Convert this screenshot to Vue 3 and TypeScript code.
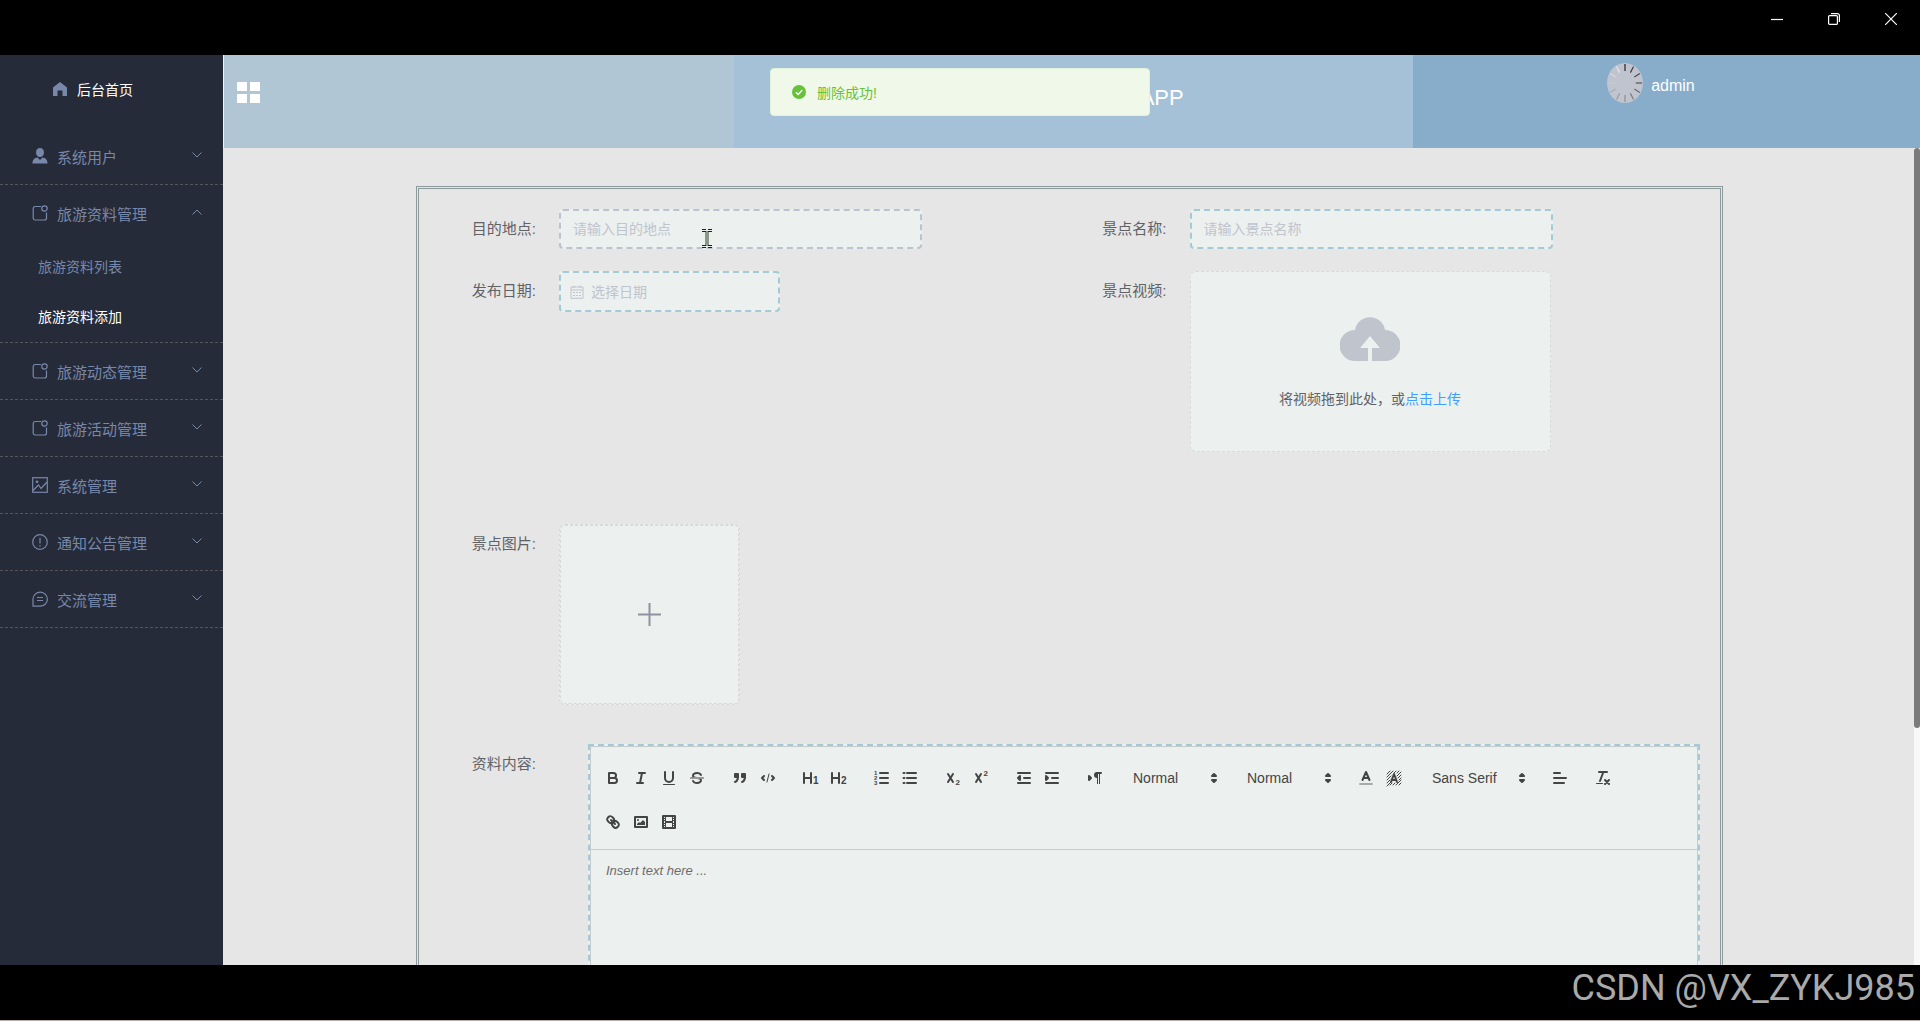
<script setup lang="ts">
import { ref } from 'vue'

interface MenuEntry {
  label: string
  icon: 'user' | 'badge' | 'picture' | 'warning' | 'chat'
  children?: string[]
}

const menu: MenuEntry[] = [
  { label: '系统用户', icon: 'user' },
  { label: '旅游资料管理', icon: 'badge', children: ['旅游资料列表', '旅游资料添加'] },
  { label: '旅游动态管理', icon: 'badge' },
  { label: '旅游活动管理', icon: 'badge' },
  { label: '系统管理', icon: 'picture' },
  { label: '通知公告管理', icon: 'warning' },
  { label: '交流管理', icon: 'chat' },
]
const activePage = ref('旅游资料添加')

const form = ref({ place: '', name: '', date: '', content: '' })

interface Tool {
  title: string
  svg: string
}
const groupsBefore: Tool[][] = [
  [
    { title: '加粗', svg: '<path d="M5,4H9.5A2.5,2.5,0,0,1,9.5,9H5Z"/><path d="M5,9h5.5A2.5,2.5,0,0,1,10.5,14H5Z"/>' },
    { title: '斜体', svg: '<path d="M7,4H13M5,14H11M8,14L10,4"/>' },
    { title: '下划线', svg: '<path d="M5,3V9a4,4,0,0,0,8,0V3"/><rect class="f" x="3" y="15" width="12" height="1" rx=".5"/>' },
    { title: '删除线', svg: '<path class="f" d="M9.007,8C6.542,7.791,6,7.519,6,6.5,6,5.792,7.283,5,9,5c1.571,0,2.765.679,2.969,1.309a1,1,0,0,0,1.9-.617C13.356,4.106,11.354,3,9,3,6.2,3,4,4.538,4,6.5a3.2,3.2,0,0,0,.5,1.843Z"/><path class="f" d="M8.984,10C11.457,10.208,12,10.479,12,11.5c0,0.708-1.283,1.5-3,1.5-1.571,0-2.765-.679-2.969-1.309a1,1,0,1,0-1.9.617C4.644,13.894,6.646,15,9,15c2.8,0,5-1.538,5-3.5a3.2,3.2,0,0,0-.5-1.843Z"/><rect class="f" x="2" y="8.5" width="14" height="1" rx=".5"/>' },
  ],
  [
    { title: '引用', svg: '<rect class="fs" x="4" y="5" width="3" height="3"/><rect class="fs" x="11" y="5" width="3" height="3"/><path class="fs" d="M7,8c0,4.031-3,5-3,5"/><path class="fs" d="M14,8c0,4.031-3,5-3,5"/>' },
    { title: '代码', svg: '<path d="M5,7L3,9L5,11M13,7L15,9L13,11"/><path class="thin" d="M10,5L8,13"/>' },
  ],
  [
    { title: '标题 1', svg: '<path d="M2,4V14M9,4V14M2,9H9"/><text x="11" y="15" font-size="10">1</text>' },
    { title: '标题 2', svg: '<path d="M2,4V14M9,4V14M2,9H9"/><text x="11" y="15" font-size="10">2</text>' },
  ],
  [
    { title: '有序列表', svg: '<path d="M7,4H15M7,9H15M7,14H15"/><text x="1" y="6" font-size="6">1</text><text x="1" y="11" font-size="6">2</text><text x="1" y="16" font-size="6">3</text>' },
    { title: '无序列表', svg: '<path d="M6,4H15M6,9H15M6,14H15M2.5,4H3.5M2.5,9H3.5M2.5,14H3.5"/>' },
  ],
  [
    { title: '下标', svg: '<path d="M4,5L9,13M9,5L4,13"/><text x="11.5" y="16" font-size="8">2</text>' },
    { title: '上标', svg: '<path d="M4,5L9,13M9,5L4,13"/><text x="11.5" y="7" font-size="8">2</text>' },
  ],
  [
    { title: '减少缩进', svg: '<path d="M3,4H15M3,14H15M9,9H15"/><path class="fs" d="M5,7V11L3,9Z"/>' },
    { title: '增加缩进', svg: '<path d="M3,4H15M3,14H15M9,9H15"/><path class="fs" d="M3,7V11L5,9Z"/>' },
  ],
  [
    { title: '文字方向', svg: '<path class="fs" d="M3,11L5,9L3,7Z"/><path d="M11,4H15"/><path class="f" d="M11,3a3,3,0,0,0,0,6h1V3Z"/><rect class="f" x="11" y="4" width="1" height="11"/><rect class="f" x="13" y="4" width="1" height="11"/>' },
  ],
]
const colorTools: Tool[] = [
  { title: '字体颜色', svg: '<path d="M5.5,11L9,3L12.5,11M6.4,9H11.6"/><path stroke-opacity=".4" d="M3,15H15"/>' },
  { title: '背景颜色', svg: '<path class="hatch" d="M2,5L5,2M2,8L8,2M2,11L6,7M2,14L5,11M2,17L6,13M9,4L11,2M12,4L14,2M12,7L16,3M13,9L16,6M14,11L16,9M5,16L7,14M8,16L10,14M11,16L16,11M14,16L16,14"/><path d="M6,13L9,5L12,13M7,11H11"/>' },
]
const lastTools: Tool[][] = [
  [{ title: '对齐', svg: '<path d="M3,9H15M3,14H13M3,4H9"/>' }],
  [{ title: '清除格式', svg: '<path d="M5,3H13M6,12L9.35,3M11,11L15,15M15,11L11,15"/><rect class="f" x="2" y="14" width="7" height="1" rx=".5"/>' }],
  [
    { title: '链接', svg: '<path d="M7,7L11,11"/><path d="M8.9,4.577a3.476,3.476,0,0,1,.36,4.679A3.476,3.476,0,0,1,4.577,8.9C3.185,7.5,2.035,6.4,4.217,4.217S7.5,3.185,8.9,4.577Z"/><path d="M13.423,9.1a3.476,3.476,0,0,0-4.679-.36,3.476,3.476,0,0,0,.36,4.679c1.392,1.392,2.5,2.542,4.679.36S14.815,10.5,13.423,9.1Z"/>' },
    { title: '图片', svg: '<rect x="3" y="4" width="12" height="10"/><circle class="f" cx="6" cy="7" r="1"/><path class="f" d="M5,12V11L7,9L8,10L11,7L13,9V12Z"/>' },
    { title: '视频', svg: '<rect x="3" y="3" width="12" height="12"/><path class="f" d="M5,3h1v12H5ZM12,3h1v12h-1ZM5,8h8v2H5ZM3,5h3v1H3ZM3,7h3v1H3ZM3,10h3v1H3ZM3,12h3v1H3ZM12,5h3v1h-3ZM12,7h3v1h-3ZM12,10h3v1h-3ZM12,12h3v1h-3Z"/>' },
  ],
]

const spokes = Array.from({ length: 12 }, (_, i) => ({
  angle: i * 30,
  color: ['#111', '#333', '#444', '#555', '#666', '#777', '#888', '#999', '#aaa', '#c8ccd2', '#d6dade', '#e6e9ec'][i],
}))
</script>

<template>
  <div class="screen">
    <div class="titlebar">
      <button type="button" aria-label="最小化">
        <svg width="12" height="12" viewBox="0 0 12 12"><path d="M0 6.5H12" /></svg>
      </button>
      <button type="button" aria-label="还原">
        <svg width="12" height="12" viewBox="0 0 12 12"><rect x=".6" y="2.6" width="8.8" height="8.8" rx="1" /><path d="M3 .6H9.4A2 2 0 0 1 11.4 2.6V9" /></svg>
      </button>
      <button type="button" aria-label="关闭">
        <svg width="12" height="12" viewBox="0 0 12 12"><path d="M0 0L12 12M12 0L0 12" /></svg>
      </button>
    </div>

    <div class="workspace">
      <nav class="sidebar">
        <a class="home" href="#">
          <svg width="14" height="14" viewBox="0 0 14 14"><path fill="currentColor" d="M7 0L14 5.5V14H9.5V8.5H4.5V14H0V5.5Z" /></svg>
          <span>后台首页</span>
        </a>
        <ul class="menu">
          <li v-for="entry in menu" :key="entry.label">
            <button type="button" class="entry" :aria-expanded="!!entry.children">
              <svg class="glyph" width="16" height="16" viewBox="0 0 16 16">
                <g v-if="entry.icon === 'user'" fill="currentColor" stroke="none">
                  <ellipse cx="8" cy="4.5" rx="4" ry="4.5" />
                  <path d="M.5 15.5C.5 11.5 2.5 10 5.5 9.5L8 12L10.5 9.5C13.5 10 15.5 11.5 15.5 15.5Z" />
                </g>
                <g v-else-if="entry.icon === 'badge'">
                  <path d="M9 1.5H3A2 2 0 0 0 1.2 3.5V13A2 2 0 0 0 3 15H12.5A2 2 0 0 0 14.5 13V7.5" />
                  <circle cx="12.5" cy="3.5" r="2.7" />
                </g>
                <g v-else-if="entry.icon === 'picture'">
                  <rect x=".7" y=".7" width="14.6" height="14.6" />
                  <circle cx="5" cy="4.8" r=".8" />
                  <path d="M1 13.5L6.5 8L9 11.5L15 5" />
                </g>
                <g v-else-if="entry.icon === 'warning'">
                  <circle cx="8" cy="8" r="7.3" />
                  <path d="M8 3.8V9.5M8 11V12.5" />
                </g>
                <g v-else>
                  <path d="M1 15.2V8A7.2 7 0 1 1 8 15.2ZM5 6.5H11M5 9.5H11" />
                </g>
              </svg>
              <span>{{ entry.label }}</span>
              <svg class="chevron" width="10" height="6" viewBox="0 0 10 6"><path :d="entry.children ? 'M.5 5.5L5 1L9.5 5.5' : 'M.5 .5L5 5L9.5 .5'" /></svg>
            </button>
            <ul v-if="entry.children" class="submenu">
              <li v-for="child in entry.children" :key="child">
                <a href="#" :class="{ active: child === activePage }" @click.prevent="activePage = child">{{ child }}</a>
              </li>
            </ul>
          </li>
        </ul>
      </nav>

      <div class="main">
        <header class="topbar">
          <div class="left">
            <button type="button" aria-label="折叠菜单">
              <svg width="23" height="21" viewBox="0 0 23 21" fill="#fff"><path d="M0 0H10V9H0ZM13 0H23V9H13ZM0 12H10V21H0ZM13 12H23V21H13Z" /></svg>
            </button>
          </div>
          <h1>APP</h1>
          <div class="account">
            <svg width="36" height="40" viewBox="0 0 36 40">
              <ellipse cx="18" cy="20" rx="18" ry="20" fill="#c0c4cf" />
              <g transform="translate(18 20) scale(.9 1)" stroke-width="1.2">
                <path v-for="s in spokes" :key="s.angle" d="M0 -19V-12" :stroke="s.color" :transform="`rotate(${s.angle})`" />
              </g>
            </svg>
            <span>admin</span>
          </div>
        </header>

        <div class="viewport">
          <div class="content">
            <form class="panel" @submit.prevent>
              <div class="field">
                <label for="place">目的地点:</label>
                <div class="caret-host">
                  <input id="place" v-model="form.place" class="text hovered" type="text" placeholder="请输入目的地点">
                  <svg class="ibeam" width="12" height="19" viewBox="0 0 12 19">
                    <path d="M6 2V17" stroke="#8b9788" stroke-width="4" />
                    <path d="M1 .5H5M7 .5H11M1 2.5H5M7 2.5H11M1 16.5H5M7 16.5H11M1 18.5H5M7 18.5H11" stroke="#1c221c" />
                  </svg>
                </div>
              </div>
              <div class="field">
                <label for="name">景点名称:</label>
                <input id="name" v-model="form.name" class="text" type="text" placeholder="请输入景点名称">
              </div>
              <div class="field tall">
                <label for="date">发布日期:</label>
                <div class="date">
                  <svg width="14" height="14" viewBox="0 0 14 14"><path d="M1 2H13V13.3H1ZM1 5H13M4 .5V3M10 .5V3M3 7.5H5M6 7.5H8M9 7.5H11M3 10.5H5M6 10.5H8M9 10.5H11" /></svg>
                  <input id="date" v-model="form.date" type="text" placeholder="选择日期">
                </div>
              </div>
              <div class="field tall">
                <label for="video">景点视频:</label>
                <div class="drop">
                  <svg width="60" height="44" viewBox="0 0 60 44">
                    <path fill="#c0c4cc" d="M15 44A15.5 15.5 0 0 1 15 13A15.2 15.2 0 0 1 45 13A15.5 15.5 0 0 1 45 44H32V31H40L30 19L20 31H28V44Z" />
                  </svg>
                  <p>将视频拖到此处，或<a href="#">点击上传</a></p>
                  <input id="video" class="file" type="file">
                </div>
              </div>
              <div class="field wide picture">
                <label for="photo">景点图片:</label>
                <div class="photo">
                  <svg width="23" height="23" viewBox="0 0 23 23"><path d="M11.5 0V23M0 11.5H23" /></svg>
                  <input id="photo" class="file" type="file">
                </div>
              </div>
              <div class="field wide">
                <label for="body">资料内容:</label>
                <div class="editor">
                  <div class="tools">
                    <div v-for="(group, g) in groupsBefore" :key="g" class="group">
                      <button v-for="t in group" :key="t.title" type="button" :aria-label="t.title"><svg viewBox="0 0 18 18" v-html="t.svg" /></button>
                    </div>
                    <div class="picker">
                      <select aria-label="字号"><option>Normal</option></select>
                      <svg viewBox="0 0 18 18"><path class="fs" d="M7,11L9,13L11,11ZM7,7L9,5L11,7Z" /></svg>
                    </div>
                    <div class="picker">
                      <select aria-label="标题级别"><option>Normal</option></select>
                      <svg viewBox="0 0 18 18"><path class="fs" d="M7,11L9,13L11,11ZM7,7L9,5L11,7Z" /></svg>
                    </div>
                    <div class="group">
                      <button v-for="t in colorTools" :key="t.title" type="button" :aria-label="t.title"><svg viewBox="0 0 18 18" v-html="t.svg" /></button>
                    </div>
                    <div class="picker font">
                      <select aria-label="字体"><option>Sans Serif</option></select>
                      <svg viewBox="0 0 18 18"><path class="fs" d="M7,11L9,13L11,11ZM7,7L9,5L11,7Z" /></svg>
                    </div>
                    <div v-for="(group, g) in lastTools" :key="'l' + g" class="group">
                      <button v-for="t in group" :key="t.title" type="button" :aria-label="t.title"><svg viewBox="0 0 18 18" v-html="t.svg" /></button>
                    </div>
                  </div>
                  <textarea id="body" v-model="form.content" placeholder="Insert text here ..." />
                </div>
              </div>
            </form>
          </div>
          <div class="scrollbar"><div class="thumb" /></div>
        </div>
      </div>
    </div>

    <footer class="credit">CSDN @VX_ZYKJ985</footer>

    <div class="toast" role="alert">
      <svg width="14" height="14" viewBox="0 0 14 14"><circle cx="7" cy="7" r="7" fill="#67c23a" /><path d="M3.8 7.2L6.2 9.5L10.3 5" fill="none" stroke="#fff" stroke-width="1.3" /></svg>
      <span>删除成功!</span>
    </div>
  </div>
</template>

<style>
body {
  margin: 0;
  background: #000;
}
</style>

<style scoped>
* {
  box-sizing: border-box;
}
.screen {
  position: relative;
  display: flex;
  flex-direction: column;
  height: 100vh;
  overflow: hidden;
  background: #000;
  font-family: "Liberation Sans", "Noto Sans CJK SC", sans-serif;
  font-size: 14px;
}
button {
  padding: 0;
  border: 0;
  background: none;
  font: inherit;
  color: inherit;
}
a {
  color: inherit;
  text-decoration: none;
}
ul {
  margin: 0;
  padding: 0;
  list-style: none;
}
svg {
  display: block;
  flex: none;
}

.titlebar {
  display: flex;
  flex: none;
  justify-content: flex-end;
  align-items: flex-start;
  height: 55px;
  padding-right: 1px;
}
.titlebar button {
  display: grid;
  place-items: center;
  width: 57px;
  height: 38px;
}
.titlebar svg {
  fill: none;
  stroke: #fff;
  stroke-width: 1.2;
}

.workspace {
  display: flex;
  flex: 1;
  min-height: 0;
}
.sidebar {
  flex: none;
  width: 223px;
  background: #262b39;
  color: #7888ab;
}
.home {
  display: flex;
  align-items: center;
  gap: 10px;
  height: 67px;
  margin-bottom: 6px;
  padding-left: 53px;
}
.home span {
  color: #fff;
}
.menu > li {
  border-bottom: 1px dashed #555559;
}
.entry {
  display: flex;
  align-items: center;
  width: 100%;
  height: 56px;
  padding: 0 21px 0 32px;
  font-size: 15px;
}
.glyph {
  margin-right: 9px;
  fill: none;
  stroke: currentColor;
  stroke-width: 1.2;
}
.chevron {
  margin: 0 0 2px auto;
  fill: none;
  stroke: currentColor;
}
.submenu {
  padding-top: 1px;
}
.submenu a {
  display: block;
  padding-left: 38px;
  line-height: 50px;
}
.submenu .active {
  color: #fff;
}

.main {
  display: flex;
  flex: 1;
  flex-direction: column;
  min-width: 0;
  background: #e6e6e6;
}
.topbar {
  display: grid;
  grid-template-columns: 30.1% 40% 1fr;
  flex: none;
  height: 93px;
  border-left: 1px solid #f2f4f6;
  color: #fff;
}
.left {
  padding: 27px 13px;
  background: #b1c6d5;
}
.topbar h1 {
  display: flex;
  justify-content: center;
  margin: 0;
  padding-left: 176px;
  background: #a5c1d7;
  font-size: 22px;
  font-weight: 400;
  line-height: 86px;
}
.account {
  display: flex;
  justify-content: center;
  gap: 8px;
  padding: 8px 31px 0 0;
  background: #87adcb;
  font-size: 16px;
  line-height: 45px;
}

.viewport {
  display: flex;
  flex: 1;
  min-height: 0;
}
.content {
  flex: 1;
  min-width: 0;
  padding: 38px 191px 0 193px;
  overflow: hidden;
}
.scrollbar {
  flex: none;
  width: 6px;
  background: #f8f8f8;
}
.thumb {
  height: 71%;
  border-radius: 3px;
  background: #7b7b7b;
}

.panel {
  display: grid;
  grid-template-columns: 1fr 1fr;
  row-gap: 22px;
  padding: 20px;
  border: 3px double #8d999b;
}
.field {
  display: flex;
  align-items: flex-start;
  min-width: 0;
}
.field.wide {
  grid-column: 1 / -1;
}
.field.tall {
  min-height: 231px;
}
.field.picture {
  min-height: 198px;
}
.field label {
  flex: none;
  width: 120px;
  padding-right: 23px;
  color: #606266;
  font-size: 15px;
  line-height: 40px;
  text-align: right;
}
.text,
.date {
  border: 2px dashed #a4cbd5;
  border-radius: 4px;
  background: #ecf0ef;
}
.text {
  display: block;
  width: 363px;
  height: 40px;
  padding: 0 12px;
  font: inherit;
}
.text.hovered {
  border-color: #b9c4d0;
}
.text::placeholder,
.date input::placeholder {
  color: #c0c4cc;
  opacity: 1;
}
.caret-host {
  position: relative;
}
.ibeam {
  position: absolute;
  top: 20px;
  left: 142px;
}
.date {
  display: flex;
  align-items: center;
  gap: 7px;
  width: 221px;
  height: 41px;
  padding-left: 9px;
}
.date svg {
  fill: none;
  stroke: #c0c4cc;
}
.date input {
  flex: 1;
  min-width: 0;
  padding: 0;
  border: 0;
  background: none;
  font: inherit;
}
.drop {
  position: relative;
  display: flex;
  flex-direction: column;
  align-items: center;
  width: 361px;
  height: 181px;
  padding-top: 45px;
  border: 1px dashed #d9d9d9;
  border-radius: 6px;
  background: #ecf0ef;
  color: #606266;
}
.drop p {
  margin: 28px 0 0;
  line-height: 20px;
}
.drop a {
  color: #409eff;
}
.file {
  position: absolute;
  inset: 0;
  width: 100%;
  opacity: 0;
}
.photo {
  position: relative;
  display: grid;
  place-items: center;
  width: 181px;
  height: 181px;
  border: 1px dashed #d9d9d9;
  border-radius: 6px;
  outline: 1px dashed #d9d9d9;
  outline-offset: -2px;
  background: #ecf0ef;
}
.photo svg {
  stroke: #8f939f;
  stroke-width: 2;
}

.editor {
  flex: 1;
  min-width: 0;
  margin-left: 29px;
  border: 2px dashed #a4cbd5;
  background: #ecf0ef;
}
.tools {
  display: flex;
  flex-wrap: wrap;
  column-gap: 15px;
  padding: 9px 8px 5px;
  border: 1px solid #c6cccc;
}
.group {
  display: flex;
}
.group button {
  display: grid;
  place-items: center;
  width: 28px;
  height: 44px;
}
.tools svg {
  width: 18px;
  height: 18px;
  fill: none;
  stroke: #444;
  stroke-width: 2;
  stroke-linecap: round;
  stroke-linejoin: round;
}
.tools :deep(.f) {
  fill: #444;
  stroke: none;
}
.tools :deep(.fs) {
  fill: #444;
}
.tools :deep(.thin) {
  stroke-width: 1;
}
.tools :deep(.hatch) {
  stroke-width: 1;
}
.tools :deep(text) {
  fill: #444;
  stroke: none;
  font-weight: 700;
}
.picker {
  position: relative;
  display: flex;
  align-items: center;
  width: 99px;
  height: 44px;
}
.picker.font {
  width: 108px;
}
.picker select {
  width: 100%;
  height: 24px;
  padding: 0 20px 0 9px;
  border: 0;
  appearance: none;
  background: none;
  color: #444;
  font: inherit;
}
.picker svg {
  position: absolute;
  right: 0;
  pointer-events: none;
}
.editor textarea {
  display: block;
  width: 100%;
  height: 400px;
  padding: 12px 15px;
  border: 1px solid #c6cccc;
  border-top: 0;
  background: none;
  font: 13px/18px "Liberation Sans", "Noto Sans CJK SC", sans-serif;
  resize: none;
}
.editor textarea::placeholder {
  color: #6b6d6d;
  font-style: italic;
  opacity: 1;
}

.credit {
  flex: none;
  height: 56px;
  padding-right: 5px;
  border-bottom: 1px solid #b5aca6;
  color: #aaa;
  font-family: Roboto, sans-serif;
  font-size: 36px;
  line-height: 47px;
  text-align: right;
}
.toast {
  position: absolute;
  top: 68px;
  left: 50%;
  display: flex;
  align-items: center;
  gap: 11px;
  width: 380px;
  height: 48px;
  margin-left: -190px;
  padding-left: 21px;
  border: 1px solid #e1f3d8;
  border-radius: 4px;
  background: #eff8e9;
  color: #67c23a;
}
</style>
